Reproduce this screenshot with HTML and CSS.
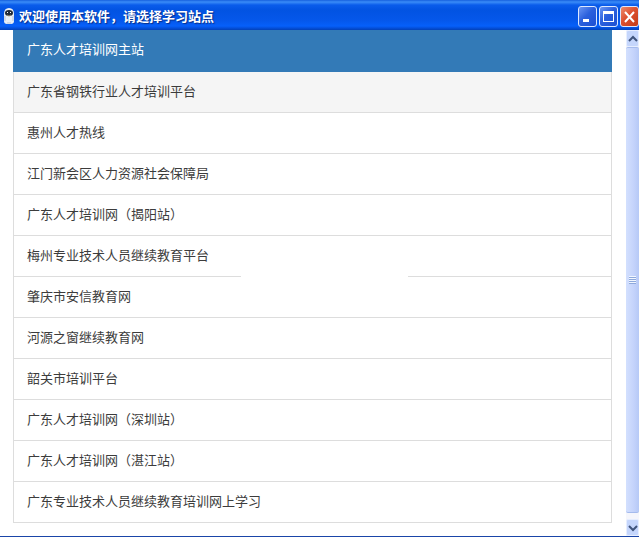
FILE: index.html
```
<!DOCTYPE html>
<html lang="zh-CN">
<head>
<meta charset="utf-8">
<title>欢迎使用本软件，请选择学习站点</title>
<link rel="stylesheet" href="styles.css">
</head>
<body>
<div class="window">
  <header class="titlebar">
    <svg class="app-icon" width="12" height="18" viewBox="0 0 12 18" aria-hidden="true">
      <path d="M1 7Q1 1 6 1Q11 1 11 7V14Q11 17 8 17H4Q1 17 1 14Z" fill="#e8eef5"/>
      <ellipse cx="6" cy="6" rx="4" ry="3" fill="#202a38"/>
      <path d="M4 5h1v1H4zM7 5h1v1H7z" fill="#fff"/>
      <path d="M4 8Q6 10 8 8" fill="none" stroke="#9a8b6c"/>
      <path d="M2 9v5M10 9v5M4 16h4" stroke="#b5c3dc" fill="none"/>
    </svg>
    <h1 class="title">欢迎使用本软件，请选择学习站点</h1>
    <div class="controls">
      <button class="control" type="button" aria-label="最小化"><svg width="17" height="19" viewBox="0 0 17 19"><path d="M4 12h6v3H4z" fill="#fff"/></svg></button>
      <button class="control" type="button" aria-label="最大化"><svg width="17" height="19" viewBox="0 0 17 19"><path d="M3 4h11v11H3zM4 7v7h9V7z" fill="#fff" fill-rule="evenodd"/></svg></button>
      <button class="control close" type="button" aria-label="关闭"><svg width="17" height="19" viewBox="0 0 17 19"><path d="M4 5l9 10M13 5L4 15" stroke="#fff" stroke-width="2"/></svg></button>
    </div>
  </header>
  <div class="body">
    <main class="content">
      <ul class="sites">
        <li><a class="site active" href="#">广东人才培训网主站</a></li>
        <li><a class="site hover" href="#">广东省钢铁行业人才培训平台</a></li>
        <li><a class="site" href="#">惠州人才热线</a></li>
        <li><a class="site" href="#">江门新会区人力资源社会保障局</a></li>
        <li><a class="site" href="#">广东人才培训网（揭阳站）</a></li>
        <li><a class="site broken" href="#">梅州专业技术人员继续教育平台</a></li>
        <li><a class="site" href="#">肇庆市安信教育网</a></li>
        <li><a class="site" href="#">河源之窗继续教育网</a></li>
        <li><a class="site" href="#">韶关市培训平台</a></li>
        <li><a class="site" href="#">广东人才培训网（深圳站）</a></li>
        <li><a class="site" href="#">广东人才培训网（湛江站）</a></li>
        <li><a class="site" href="#">广东专业技术人员继续教育培训网上学习</a></li>
      </ul>
    </main>
    <div class="scrollbar">
      <button class="arrow" type="button" aria-label="向上滚动"><svg width="10" height="8" viewBox="0 0 10 8"><path d="M1 6l4-4 4 4" fill="none" stroke="#3f547c" stroke-width="2"/></svg></button>
      <div class="thumb"><span class="grip"></span></div>
      <button class="arrow" type="button" aria-label="向下滚动"><svg width="10" height="8" viewBox="0 0 10 8"><path d="M1 2l4 4 4-4" fill="none" stroke="#3f547c" stroke-width="2"/></svg></button>
    </div>
  </div>
</div>
</body>
</html>
```
FILE: styles.css
```
* {
  box-sizing: border-box;
}

body {
  margin: 0;
  background: #fff;
  color: #3c3c3c;
  font: 13px/20px "Noto Sans CJK SC", sans-serif;
}

.window {
  display: flex;
  flex-direction: column;
  min-height: 100vh;
  border-bottom: 1px solid #1a45a8;
}

.titlebar {
  display: flex;
  align-items: center;
  height: 30px;
  padding: 2px 0 0 3px;
  background: linear-gradient(#1660de 0, #3a8cf8 2px, #0a5ceb 5px, #0253e2 10px, #0557ea 20px, #0660fa 26px, #0450dc 28px, #0341b8 30px);
}

.app-icon {
  flex: none;
}

.title {
  flex: 1;
  margin: 0 0 0 4px;
  color: #fff;
  font-size: 13px;
  line-height: 20px;
  font-weight: 700;
  text-shadow: 1px 1px 1px #0a2f87;
  white-space: nowrap;
}

.controls {
  display: flex;
  gap: 2px;
}

.control {
  display: flex;
  align-items: center;
  justify-content: center;
  width: 19px;
  height: 21px;
  padding: 0;
  border: 1px solid #dce8ff;
  border-radius: 3px;
  background: linear-gradient(135deg, #6a96f4, #2b60dd 45%, #1c4fd2);
}

.control svg {
  flex: none;
}

.close {
  background: linear-gradient(135deg, #ee8b6c, #dc5030 45%, #c23c18);
}

.body {
  display: flex;
  flex: 1;
}

.content {
  flex: 1;
  padding: 0 14px 13px 13px;
}

.sites {
  margin: 0;
  padding: 0;
  list-style: none;
  border: solid #ddd;
  border-width: 0 1px;
}

.site {
  position: relative;
  display: block;
  padding: 9px 13px 11px;
  border-bottom: 1px solid #ddd;
  color: #3c3c3c;
  text-decoration: none;
}

.active {
  margin: 0 -1px;
  padding: 9px 14px 12px;
  border-bottom-color: #337ab7;
  background: #337ab7;
  color: #fff;
}

.hover {
  background: #f5f5f5;
}

/* Blank stretch in the divider */
.broken::after {
  content: "";
  position: absolute;
  bottom: -1px;
  left: 38%;
  width: 28%;
  height: 1px;
  background: #fff;
}

.scrollbar {
  display: flex;
  flex-direction: column;
  width: 13px;
  background: #f5f6fc;
}

.arrow {
  display: flex;
  align-items: center;
  justify-content: center;
  height: 17px;
  padding: 0;
  border: 1px solid #e6eeff;
  border-radius: 2px;
  background: #c5d6fc;
}

.thumb {
  display: flex;
  align-items: center;
  justify-content: center;
  flex: 1;
  margin-bottom: 6px;
  border: 1px solid #a5bbed;
  border-width: 1px 0;
  border-radius: 2px;
  background: linear-gradient(90deg, #d3e0fe, #c4d3fb 60%, #b6c9f6);
}

.grip {
  width: 7px;
  height: 8px;
  background: repeating-linear-gradient(#f2f7ff 0 1px, #8ea9dc 1px 2px);
}
```
